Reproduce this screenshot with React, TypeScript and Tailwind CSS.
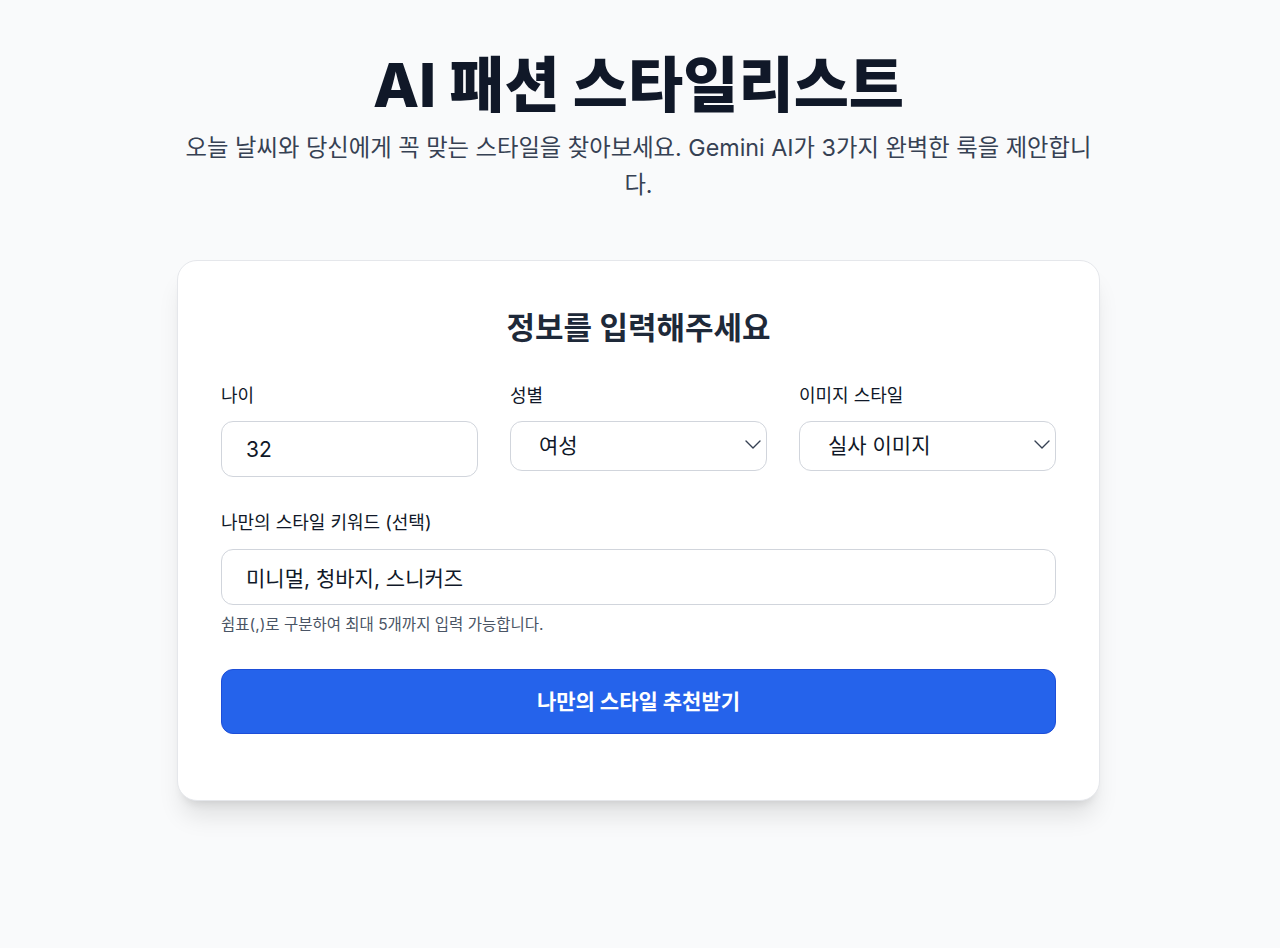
const FONT = { fontFamily: 'Inter, "Noto Sans CJK KR", sans-serif' };

function Field({ label, children }: { label: string; children: React.ReactNode }) {
  return (
    <div className="flex flex-col">
      <label className="mb-[13px] text-[18px] leading-6 text-gray-900">{label}</label>
      {children}
    </div>
  );
}

function SelectBox({ value, options }: { value: string; options: string[] }) {
  return (
    <div className="relative">
      <select
        defaultValue={value}
        className="h-[50px] w-full appearance-none rounded-xl border border-gray-300 bg-white pl-[28px] pr-10 text-[21px] text-gray-900 outline-none"
      >
        {options.map((o) => (
          <option key={o}>{o}</option>
        ))}
      </select>
      <svg
        viewBox="0 0 16 9"
        className="pointer-events-none absolute right-[6px] top-[19px] h-[9px] w-[16px] text-gray-700"
        fill="none"
        stroke="currentColor"
        strokeWidth={1.4}
        strokeLinecap="round"
        strokeLinejoin="round"
      >
        <path d="M1 1 L8 8 L15 1" />
      </svg>
    </div>
  );
}

export default function App() {
  return (
    <div className="min-h-screen bg-gray-50 pr-[3px] pt-[55px]" style={FONT}>
      <div className="mx-auto w-[923px]">
        <h1 className="text-center text-[60px] font-extrabold leading-[60px] text-gray-900">
          AI 패션 스타일리스트
        </h1>
        <p className="mx-auto mt-[14px] w-[916px] text-center text-[23.3px] leading-[37px] text-gray-700">
          오늘 날씨와 당신에게 꼭 맞는 스타일을 찾아보세요. Gemini AI가 3가지 완벽한 룩을 제안합니다.
        </p>

        <div className="mt-[57px] rounded-[20px] border border-gray-200 bg-white px-[43px] pb-[66px] pt-[49px] shadow-xl">
          <h2 className="text-center text-[31px] font-bold leading-9 text-gray-800">정보를 입력해주세요</h2>

          <div className="mt-[38px] grid grid-cols-3 items-start gap-8">
            <Field label="나이">
              <input
                type="number"
                defaultValue={32}
                className="h-[56px] w-full rounded-xl border border-gray-300 bg-white px-6 text-[21px] text-gray-900 outline-none"
              />
            </Field>
            <Field label="성별">
              <SelectBox value="여성" options={["여성", "남성"]} />
            </Field>
            <Field label="이미지 스타일">
              <SelectBox value="실사 이미지" options={["실사 이미지", "일러스트"]} />
            </Field>
          </div>

          <div className="mt-[34px] flex flex-col">
            <label className="mb-[14px] text-[18px] leading-6 text-gray-900">나만의 스타일 키워드 (선택)</label>
            <input
              type="text"
              defaultValue="미니멀, 청바지, 스니커즈"
              className="h-[56px] w-full rounded-xl border border-gray-300 bg-white px-6 text-[21px] text-gray-900 outline-none"
            />
            <p className="mt-[10px] text-[15.5px] leading-5 text-gray-600">
              쉼표(,)로 구분하여 최대 5개까지 입력 가능합니다.
            </p>
          </div>

          <button
            type="button"
            className="mt-[34px] h-[65px] w-full rounded-xl border border-[#1d4ed8] bg-[#2563eb] text-[21px] font-bold text-white"
          >
            나만의 스타일 추천받기
          </button>
        </div>
      </div>
    </div>
  );
}
